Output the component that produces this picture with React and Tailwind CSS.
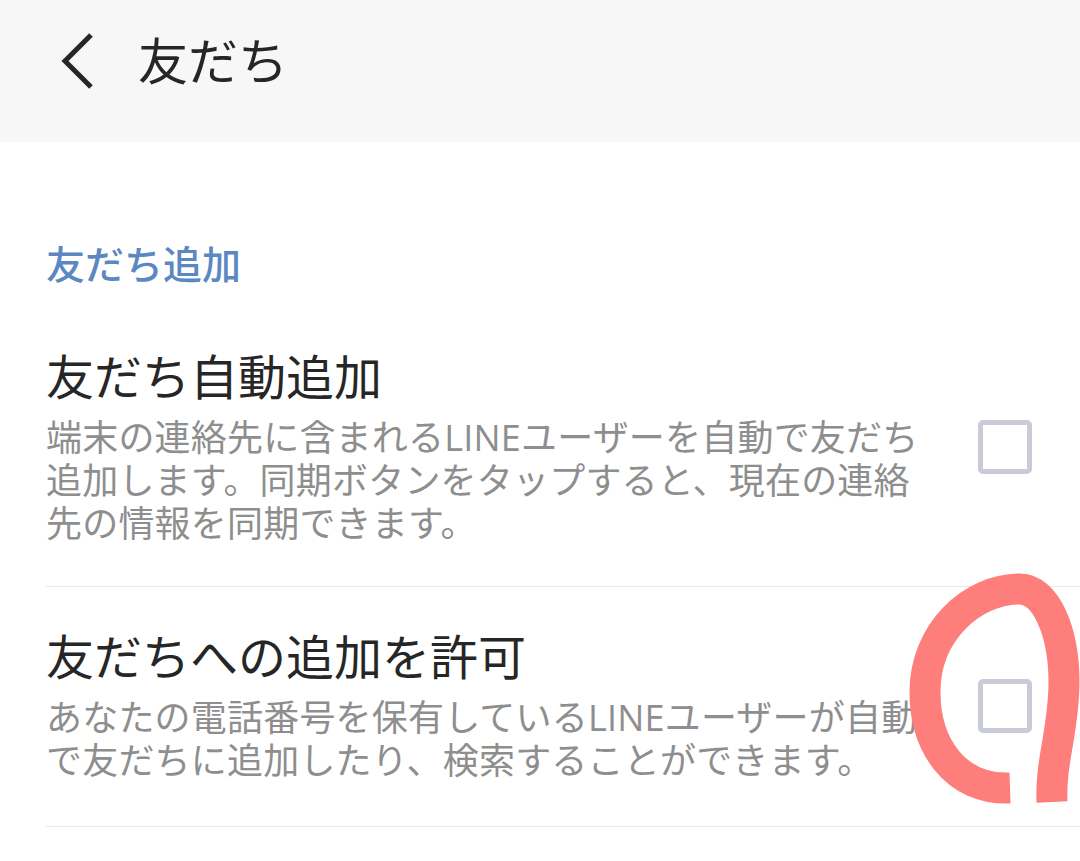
import React from "react";

const items = [
  {
    title: "友だち自動追加",
    pb: "pb-[41px]",
    lines: [
      "端末の連絡先に含まれるLINEユーザーを自動で友だち",
      "追加します。同期ボタンをタップすると、現在の連絡",
      "先の情報を同期できます。",
    ],
  },
  {
    title: "友だちへの追加を許可",
    pb: "pb-[44px]",
    lines: [
      "あなたの電話番号を保有しているLINEユーザーが自動",
      "で友だちに追加したり、検索することができます。",
    ],
  },
];

function SettingRow({ item }) {
  return (
    <div className={`flex items-center border-b border-[#e8e8e8] pt-[42px] ${item.pb}`}>
      <div className="flex-1">
        <div className="text-[48px] leading-[56px] text-[#262626] whitespace-nowrap">{item.title}</div>
        <div className="mt-[11px] text-[36px] leading-[43px] tracking-[0.2px] text-[#8e8e8e] whitespace-nowrap">
          {item.lines.map((line, i) => (
            <div key={i}>{line}</div>
          ))}
        </div>
      </div>
      <div className="mr-[48px] w-[54px] h-[54px] rounded-[5px] border-[5px] border-[#c9ccd8] bg-white" />
    </div>
  );
}

export default function App() {
  return (
    <div className="relative w-[1080px] h-[861px] overflow-hidden bg-white font-['Open_Sans','Noto_Sans_CJK_JP',sans-serif]">
      <div className="h-[142px] bg-[#f7f7f7] flex items-center pb-[20px] pl-[58px]">
        <svg width="40" height="60" viewBox="0 0 40 60" fill="none">
          <polyline points="33,4 7,30 33,56" stroke="#262626" strokeWidth="5" />
        </svg>
        <div className="ml-[40px] text-[50px] leading-[60px] text-[#262626]">友だち</div>
      </div>

      <div className="pl-[46px] pt-[98px]">
        <div className="mb-[19px] text-[39px] leading-[48px] font-medium text-[#5b87c2]">友だち追加</div>
        {items.map((item) => (
          <SettingRow key={item.title} item={item} />
        ))}
      </div>

      {/* red hand-drawn mark around the second checkbox */}
      <svg
        className="absolute inset-0 pointer-events-none"
        width="1080"
        height="861"
        viewBox="0 0 1080 861"
        fill="none"
      >
        <path
          d="M1010 788 C955 790 925 745 925 692 C925 632 972 589 1020 589 C1046 589 1064 632 1064 682 C1064 730 1050 762 1052 802"
          stroke="#fd7e7b"
          strokeWidth="31"
          strokeLinejoin="round"
        />
      </svg>
    </div>
  );
}
